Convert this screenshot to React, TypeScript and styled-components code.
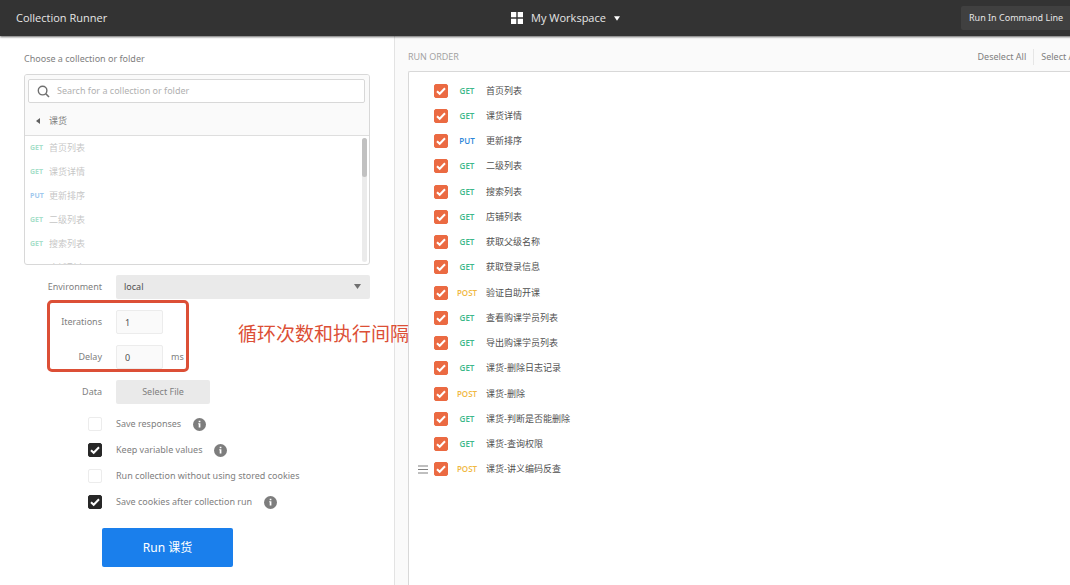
import React from "react";
import styled, { createGlobalStyle } from "styled-components";

type Method = "GET" | "PUT" | "POST";

const requests: { method: Method; name: string }[] = [
  { method: "GET", name: "首页列表" },
  { method: "GET", name: "课货详情" },
  { method: "PUT", name: "更新排序" },
  { method: "GET", name: "二级列表" },
  { method: "GET", name: "搜索列表" },
  { method: "GET", name: "店铺列表" },
  { method: "GET", name: "获取父级名称" },
  { method: "GET", name: "获取登录信息" },
  { method: "POST", name: "验证自助开课" },
  { method: "GET", name: "查看购课学员列表" },
  { method: "GET", name: "导出购课学员列表" },
  { method: "GET", name: "课货-删除日志记录" },
  { method: "POST", name: "课货-删除" },
  { method: "GET", name: "课货-判断是否能删除" },
  { method: "GET", name: "课货-查询权限" },
  { method: "POST", name: "课货-讲义编码反查" },
];

const methodColor: Record<Method, string> = {
  GET: "#3cb88a",
  PUT: "#2b86d9",
  POST: "#f0b840",
};

const GlobalStyle = createGlobalStyle`
  *, *::before, *::after { box-sizing: border-box; }
  html, body { margin: 0; }
  body {
    overflow-x: hidden;
    background: #fff;
    color: #808080;
    font-family: "Noto Sans", "Noto Sans CJK SC", sans-serif;
    font-size: 9px;
    line-height: 16px;
  }
  button, input, select { font: inherit; color: inherit; margin: 0; }
  ul { list-style: none; margin: 0; padding: 0; }
`;

const Page = styled.div`
  display: flex;
  flex-direction: column;
  min-width: 1130px;
  min-height: 100vh;
`;

const Header = styled.header`
  display: grid;
  grid-template-columns: 1fr auto 1fr;
  align-items: center;
  height: 36px;
  padding: 0 55px 0 16px;
  background: #333;
  color: #e6e6e6;
  font-family: "Open Sans", sans-serif;
  box-shadow: 0 1px 2px rgba(0, 0, 0, 0.6);
  z-index: 1;
`;

const Title = styled.h1`
  margin: 0;
  font-size: 11px;
  font-weight: 400;
`;

const WorkspaceButton = styled.button`
  display: flex;
  align-items: center;
  gap: 8px;
  margin-left: 40px;
  padding: 0;
  border: 0;
  background: none;
  font-size: 11px;
`;

const CommandButton = styled.button`
  justify-self: end;
  height: 24px;
  min-width: 114px;
  padding: 0 8px;
  border: 0;
  border-radius: 2px;
  background: #404040;
  font-family: "Noto Sans", sans-serif;
  text-align: left;
`;

const Columns = styled.div`
  display: flex;
  flex: 1;
`;

const Sidebar = styled.main`
  position: relative;
  flex: 0 0 395px;
  padding: 15px 24px 17px;
  border-right: 1px solid #e3e3e3;
`;

const FieldTitle = styled.label`
  display: block;
  margin-bottom: 7px;
`;

const Picker = styled.section`
  height: 191px;
  display: flex;
  flex-direction: column;
  border: 1px solid #d8d8d8;
  border-radius: 3px;
  overflow: hidden;
`;

const PickerHead = styled.div`
  padding: 4px 4px 0 3px;
  border-bottom: 1px solid #dedede;
  background: #fafafa;
`;

const SearchBox = styled.div`
  display: flex;
  align-items: center;
  gap: 7px;
  height: 24px;
  padding: 0 8px;
  border: 1px solid #d8d8d8;
  border-radius: 2px;
  background: #fff;
`;

const SearchInput = styled.input`
  flex: 1;
  min-width: 0;
  padding: 0;
  border: 0;
  outline: 0;
  background: none;
  &::placeholder { color: #b0b0b0; opacity: 1; }
`;

const BackButton = styled.button`
  display: flex;
  align-items: center;
  gap: 9px;
  height: 32px;
  padding: 4px 8px 0;
  border: 0;
  background: none;
`;

const PickerBody = styled.div`
  flex: 1;
  min-height: 0;
  display: flex;
  justify-content: space-between;
  padding: 0 2px 0 5px;
`;

const PickerScroll = styled.div`
  flex: 1;
  overflow: hidden;
`;

const PickerList = styled.ul`
  display: grid;
  grid-auto-rows: 24px;
  opacity: 0.45;
`;

const PickerItem = styled.li`
  display: grid;
  grid-template-columns: 19px 1fr;
  align-items: center;
`;

const Track = styled.div`
  width: 5px;
  margin: 2px 0;
  border-radius: 3px;
  background: #ebebeb;
`;

const Thumb = styled.div`
  height: 39px;
  border-radius: 3px;
  background: #c1c1c1;
`;

const MethodTag = styled.span<{ $method: Method; $small?: boolean }>`
  color: ${(p) => methodColor[p.$method]};
  font-family: "Open Sans", sans-serif;
  font-size: ${(p) => (p.$small ? 7 : 8)}px;
  font-weight: ${(p) => (p.$small ? 700 : 600)};
  text-align: ${(p) => (p.$small ? "left" : "center")};
`;

const RequestName = styled.span<{ $strong?: boolean }>`
  color: ${(p) => (p.$strong ? "#505050" : "#808080")};
  white-space: nowrap;
`;

const Form = styled.form`
  display: flex;
  flex-direction: column;
  padding-top: 10px;
`;

const Fields = styled.div`
  display: grid;
  row-gap: 11px;
`;

const FieldRow = styled.div`
  display: grid;
  grid-template-columns: 78px 1fr;
  column-gap: 14px;
  align-items: center;
`;

const FieldLabel = styled.label`
  text-align: right;
`;

const SelectWrap = styled.div`
  position: relative;
  display: flex;
  svg { position: absolute; right: 9px; top: 9px; pointer-events: none; }
`;

const Select = styled.select`
  appearance: none;
  width: 100%;
  height: 24px;
  padding: 0 8px;
  border: 0;
  border-radius: 2px;
  background: #eaeaea;
  color: #505050;
`;

const NumberCell = styled.div`
  display: flex;
  align-items: center;
  gap: 8px;
`;

const NumberInput = styled.input`
  width: 47px;
  height: 24px;
  padding: 0 8px;
  border: 1px solid #ececec;
  border-radius: 2px;
  background: #fafafa;
  color: #505050;
`;

const FileButton = styled.button`
  justify-self: start;
  width: 94px;
  height: 24px;
  border: 0;
  border-radius: 2px;
  background: #eaeaea;
`;

const Options = styled.div`
  display: flex;
  flex-direction: column;
  margin: 7px 0 13px 64px;
`;

const OptionRow = styled.div`
  display: flex;
  align-items: center;
  height: 26px;
  gap: 12px;
`;

const OptionLabel = styled.label`
  display: flex;
  align-items: center;
  gap: 14px;
`;

const CheckWrap = styled.span`
  position: relative;
  display: flex;
  svg { position: absolute; inset: 0; pointer-events: none; }
`;

const CheckInput = styled.input<{ $color: string }>`
  appearance: none;
  width: 14px;
  height: 14px;
  border: 1px solid #ececec;
  border-radius: 2px;
  background: #fff;
  &:checked { border-color: ${(p) => p.$color}; background: ${(p) => p.$color}; }
  &:not(:checked) + svg { display: none; }
`;

const RunButton = styled.button`
  align-self: flex-start;
  width: 131px;
  height: 39px;
  margin-left: 78px;
  border: 0;
  border-radius: 2px;
  background: #1a7fec;
  color: #fff;
  font-size: 12px;
`;

const Highlight = styled.div`
  position: absolute;
  left: 47px;
  top: 264px;
  width: 142px;
  height: 72px;
  border: 3px solid #dc4f36;
  border-radius: 5px;
  pointer-events: none;
`;

const Note = styled.p`
  position: absolute;
  left: 238px;
  top: 283px;
  margin: 0;
  color: #dc4f36;
  font-family: "Noto Sans CJK SC", sans-serif;
  font-size: 19px;
  line-height: 28px;
  white-space: nowrap;
`;

const OrderPane = styled.section`
  flex: 1;
  display: flex;
  flex-direction: column;
  padding-left: 13px;
  background: #fafafa;
`;

const OrderBar = styled.div`
  display: flex;
  align-items: center;
  justify-content: space-between;
  height: 35px;
  padding: 6px 44px 0 0;
`;

const OrderTitle = styled.h2`
  margin: 0;
  color: #a0a0a0;
  font-family: "Open Sans", sans-serif;
  font-size: 9px;
  font-weight: 400;
`;

const OrderActions = styled.div`
  display: flex;
`;

const TextButton = styled.button`
  padding: 0 7px;
  border: 0;
  background: none;
  & + & { border-left: 1px solid #e6e6e6; }
`;

const OrderBox = styled.div`
  flex: 1;
  padding: 6px 9px;
  border: 1px solid #d8d8d8;
  border-width: 1px 0 0 1px;
  border-radius: 2px 0 0 0;
  background: #fff;
`;

const OrderList = styled.ul`
  display: grid;
  grid-auto-rows: 1fr;
  min-height: 404px;
`;

const OrderItem = styled.li`
  display: grid;
  grid-template-columns: 16px 14px 38px 1fr;
  align-items: center;
`;

const Caret = ({ width, color }: { width: number; color: string }) => (
  <svg width={width} height={5} viewBox="0 0 7 5" aria-hidden="true">
    <path d="M0 0h7L3.500 5z" fill={color} />
  </svg>
);

const Check = ({ id, color, checked }: { id: string; color: string; checked?: boolean }) => (
  <CheckWrap>
    <CheckInput id={id} type="checkbox" $color={color} defaultChecked={checked} />
    <svg width="14" height="14" viewBox="0 0 14 14" fill="none" aria-hidden="true">
      <path d="M3 7.200l2.700 2.600L11 4.300" stroke="#fff" strokeWidth="2" />
    </svg>
  </CheckWrap>
);

const Info = () => (
  <svg width="13" height="13" viewBox="0 0 13 13" aria-hidden="true">
    <circle cx="6.500" cy="6.500" r="6.500" fill="#7d7d7d" />
    <path d="M5.700 2.800h1.700v1.500H5.700zM5.200 5.300h2.200v4.300H5.700V6.300h-.5z" fill="#fff" />
  </svg>
);

const options = [
  { id: "save-responses", label: "Save responses", checked: false, info: true },
  { id: "keep-values", label: "Keep variable values", checked: true, info: true },
  { id: "no-cookies", label: "Run collection without using stored cookies", checked: false, info: false },
  { id: "save-cookies", label: "Save cookies after collection run", checked: true, info: true },
];

export default function App() {
  return (
    <>
      <GlobalStyle />
      <Page>
        <Header>
          <Title>Collection Runner</Title>
          <WorkspaceButton type="button">
            <svg width="12" height="12" viewBox="0 0 12 12" fill="#fff" aria-hidden="true">
              <path d="M0 0h5.300v5.300H0zM6.700 0H12v5.300H6.700zM0 6.700h5.300V12H0zM6.700 6.700H12V12H6.700z" />
            </svg>
            My Workspace
            <Caret width={6} color="#fff" />
          </WorkspaceButton>
          <CommandButton type="button">Run In Command Line</CommandButton>
        </Header>
        <Columns>
          <Sidebar>
            <FieldTitle htmlFor="search">Choose a collection or folder</FieldTitle>
            <Picker>
              <PickerHead>
                <SearchBox>
                  <svg width="13" height="13" viewBox="0 0 13 13" fill="none" stroke="#707070" aria-hidden="true">
                    <circle cx="5.600" cy="5.600" r="4.300" strokeWidth="1.400" />
                    <path d="M8.800 8.800l3.200 3.200" strokeWidth="1.600" />
                  </svg>
                  <SearchInput id="search" type="text" placeholder="Search for a collection or folder" />
                </SearchBox>
                <BackButton type="button">
                  <svg width="4" height="6" viewBox="0 0 4 6" aria-hidden="true">
                    <path d="M4 0v6L0 3z" fill="#606060" />
                  </svg>
                  课货
                </BackButton>
              </PickerHead>
              <PickerBody>
                <PickerScroll>
                  <PickerList>
                    {requests.slice(0, 6).map((r) => (
                      <PickerItem key={r.name}>
                        <MethodTag $method={r.method} $small>{r.method}</MethodTag>
                        <RequestName>{r.name}</RequestName>
                      </PickerItem>
                    ))}
                  </PickerList>
                </PickerScroll>
                <Track><Thumb /></Track>
              </PickerBody>
            </Picker>
            <Form onSubmit={(e) => e.preventDefault()}>
              <Fields>
                <FieldRow>
                  <FieldLabel htmlFor="environment">Environment</FieldLabel>
                  <SelectWrap>
                    <Select id="environment" defaultValue="local">
                      <option value="local">local</option>
                    </Select>
                    <Caret width={7} color="#707070" />
                  </SelectWrap>
                </FieldRow>
                <FieldRow>
                  <FieldLabel htmlFor="iterations">Iterations</FieldLabel>
                  <NumberCell>
                    <NumberInput id="iterations" type="text" defaultValue="1" />
                  </NumberCell>
                </FieldRow>
                <FieldRow>
                  <FieldLabel htmlFor="delay">Delay</FieldLabel>
                  <NumberCell>
                    <NumberInput id="delay" type="text" defaultValue="0" />
                    <span>ms</span>
                  </NumberCell>
                </FieldRow>
                <FieldRow>
                  <FieldLabel htmlFor="data">Data</FieldLabel>
                  <FileButton id="data" type="button">Select File</FileButton>
                </FieldRow>
              </Fields>
              <Options>
                {options.map((o) => (
                  <OptionRow key={o.id}>
                    <OptionLabel htmlFor={o.id}>
                      <Check id={o.id} color="#282828" checked={o.checked} />
                      {o.label}
                    </OptionLabel>
                    {o.info && <Info />}
                  </OptionRow>
                ))}
              </Options>
              <RunButton type="submit">Run 课货</RunButton>
            </Form>
            <Highlight />
            <Note>循环次数和执行间隔</Note>
          </Sidebar>
          <OrderPane>
            <OrderBar>
              <OrderTitle>RUN ORDER</OrderTitle>
              <OrderActions>
                <TextButton type="button">Deselect All</TextButton>
                <TextButton type="button">Select All</TextButton>
              </OrderActions>
            </OrderBar>
            <OrderBox>
              <OrderList>
                {requests.map((r, i) => (
                  <OrderItem key={r.name}>
                    {i === requests.length - 1 ? (
                      <svg width="10" height="9" viewBox="0 0 10 9" stroke="#808080" aria-hidden="true">
                        <path d="M0 1h10M0 4.500h10M0 8h10" strokeWidth="1.200" />
                      </svg>
                    ) : (
                      <span />
                    )}
                    <Check id={`request-${i}`} color="#eb6a42" checked />
                    <MethodTag $method={r.method}>{r.method}</MethodTag>
                    <label htmlFor={`request-${i}`}>
                      <RequestName $strong>{r.name}</RequestName>
                    </label>
                  </OrderItem>
                ))}
              </OrderList>
            </OrderBox>
          </OrderPane>
        </Columns>
      </Page>
    </>
  );
}
